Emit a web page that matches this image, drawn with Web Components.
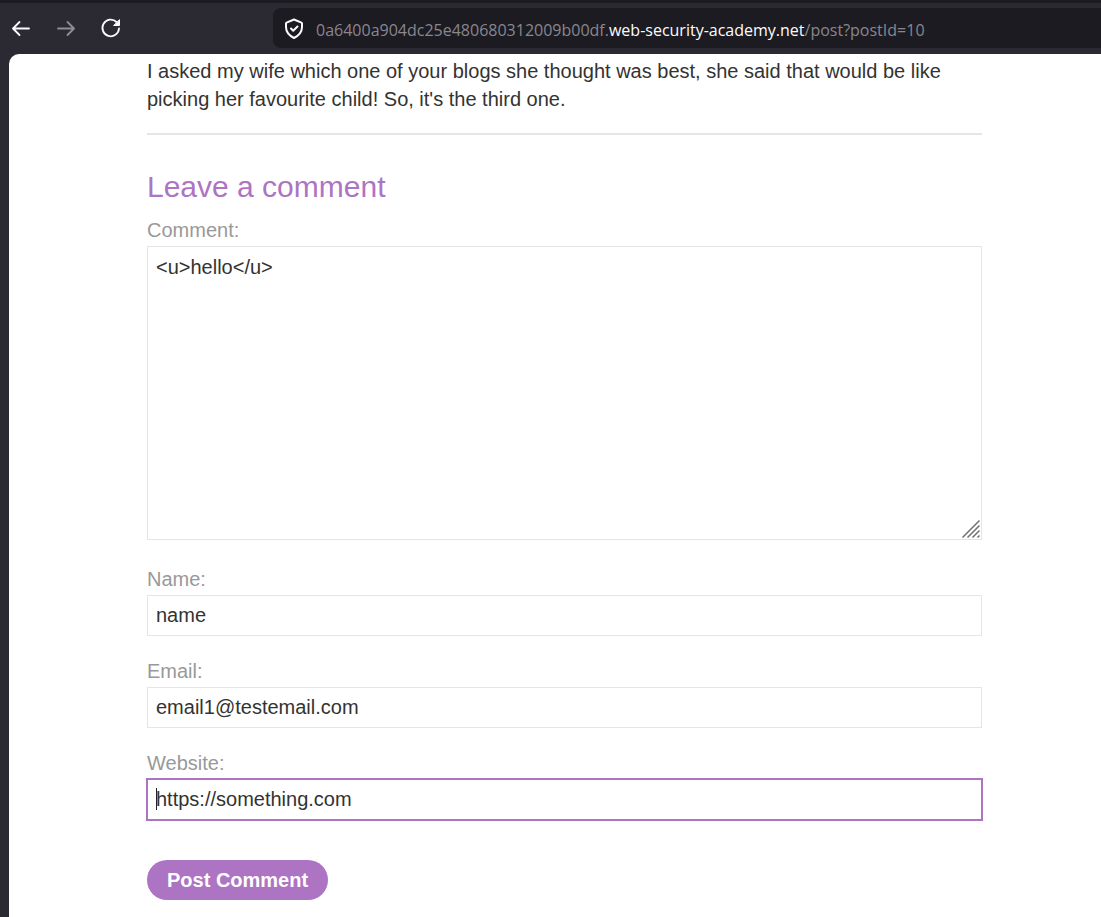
<!DOCTYPE html>
<html lang="en">
<head>
<meta charset="UTF-8">
<meta name="viewport" content="width=device-width, initial-scale=1">
<title>Blog post</title>
<style>
  body {
    margin: 0;
    background-color: #2b2a33;
    font-family: "Liberation Sans", Arial, sans-serif;
    font-size: 20px;
    line-height: 28px;
    color: #333332;
  }
</style>
</head>
<body>
<browser-window>
  <nav-toolbar slot="toolbar" subdomain="0a6400a904dc25e480680312009b00df." domain="web-security-academy.net" path="/post?postId=10"></nav-toolbar>
  <blog-comment>I asked my wife which one of your blogs she thought was best, she said that would be like picking her favourite child! So, it's the third one.</blog-comment>
  <comment-form></comment-form>
</browser-window>

<script>
/**
 * Browser frame: toolbar on top, page with a rounded corner below
 */
class BrowserWindow extends HTMLElement {
  constructor() {
    super();
    this.attachShadow({ mode: 'open' });
    this.shadowRoot.innerHTML = `
      <style>
        :host {
          display: flex;
          flex-direction: column;
          min-height: 100vh;
        }

        main {
          flex: 1;
          margin-left: 9px;
          padding: 3px 119px 17px 138px;
          background-color: #fff;
          border-top-left-radius: 10px;
        }
      </style>
      <slot name="toolbar"></slot>
      <main><slot></slot></main>
    `;
  }
}

/**
 * Navigation buttons and the address bar
 */
class NavToolbar extends HTMLElement {
  constructor() {
    super();
    this.attachShadow({ mode: 'open' });
  }

  connectedCallback() {
    this.shadowRoot.innerHTML = `
      <style>
        :host {
          display: flex;
          align-items: center;
          padding: 5px 0 6px 9px;
          border-top: 3px solid #1c1b22;
          color: #fbfbfe;
        }

        .buttons {
          display: flex;
          gap: 21px;
          flex: 0 0 264px;
        }

        button {
          display: flex;
          padding: 0;
          border: none;
          background: none;
          color: inherit;
        }

        button:disabled {
          color: #8f8e94;
        }

        svg {
          flex: none;
          fill: none;
          stroke: currentColor;
          stroke-width: 1.8;
          stroke-linecap: round;
          stroke-linejoin: round;
        }

        .address {
          display: flex;
          align-items: center;
          gap: 10px;
          flex: 1;
          height: 40px;
          padding-left: 9px;
          background-color: #1c1b22;
          border-radius: 8px 0 0 8px;
        }

        .address svg {
          stroke-width: 2;
        }

        .url {
          padding-top: 4px;
          font-family: "Open Sans", "Noto Sans", sans-serif;
          font-size: 16px;
          line-height: 24px;
          white-space: nowrap;
          color: #88878d;
        }

        .domain {
          color: #fbfbfe;
        }
      </style>
      <div class="buttons">
        <button type="button" aria-label="Back">
          <svg width="24" height="24" viewBox="0 0 24 24"><path d="M20 12.500H4.500M10.500 6l-6.500 6.500 6.500 6.500"/></svg>
        </button>
        <button type="button" aria-label="Forward" disabled>
          <svg width="24" height="24" viewBox="0 0 24 24"><path d="M4 12.500H19.500M13.500 6l6.500 6.500-6.500 6.500"/></svg>
        </button>
        <button type="button" aria-label="Reload">
          <svg width="24" height="24" viewBox="0 0 24 24"><path d="M17.500 6a8.300 8.300 0 1 0 2.500 6.500"/><path d="M20.500 4v5.500h-5.500z" fill="currentColor" stroke-width="1"/></svg>
        </button>
      </div>
      <div class="address">
        <svg width="24" height="24" viewBox="0 0 24 24" role="img" aria-label="Tracking protection"><path d="M12 3.500l7.500 3.200q.5.200.5.800v3.500c0 5-3.500 8.700-8 11-4.500-2.300-8-6-8-11V7.500q0-.6.500-.8z"/><path d="M9 12.500l2.200 2.200L15.500 10.500"/></svg>
        <div class="url"><span>${this.getAttribute('subdomain')}</span><span class="domain">${this.getAttribute('domain')}</span><span>${this.getAttribute('path')}</span></div>
      </div>
    `;
  }
}

/**
 * A single comment, closed by a rule
 */
class BlogComment extends HTMLElement {
  constructor() {
    super();
    this.attachShadow({ mode: 'open' });
    this.shadowRoot.innerHTML = `
      <style>
        :host {
          display: block;
        }

        p {
          margin: 0 0 20px;
        }

        hr {
          margin: 0;
          border: none;
          border-top: 2px solid #e5e5e5;
        }
      </style>
      <p><slot></slot></p>
      <hr>
    `;
  }
}

/**
 * Labelled text box, single line or multiline
 */
class FormField extends HTMLElement {
  constructor() {
    super();
    this.attachShadow({ mode: 'open' });
  }

  connectedCallback() {
    const type = this.getAttribute('type');
    this.shadowRoot.innerHTML = `
      <style>
        :host {
          display: block;
        }

        label {
          display: block;
          margin-bottom: 2px;
          color: #999;
        }

        .box {
          position: relative;
          display: flex;
        }

        input,
        textarea {
          flex: 1;
          min-width: 0;
          box-sizing: border-box;
          height: 41px;
          margin: 0;
          padding: 0 8px;
          border: 1px solid #e5e5e5;
          border-radius: 0;
          outline: none;
          background-color: #fff;
          font: inherit;
          color: #333332;
        }

        textarea {
          height: 294px;
          padding: 6px 8px;
          resize: none;
        }

        /* active field: thicker border and the caret before the first letter */
        :host([active]) input {
          border-color: #ad74c3;
          box-shadow: 0 0 0 1px #ad74c3;
          background-image: linear-gradient(#222, #222);
          background-size: 1px 22px;
          background-position: 8px 8px;
          background-repeat: no-repeat;
        }

        .grip {
          position: absolute;
          right: 1px;
          bottom: 2px;
          stroke: #70706e;
          pointer-events: none;
        }
      </style>
      <label for="control">${this.getAttribute('label')}</label>
      <div class="box"></div>
    `;

    const box = this.shadowRoot.querySelector('.box');
    const control = document.createElement(type === 'multiline' ? 'textarea' : 'input');
    control.id = 'control';
    control.spellcheck = false;
    if (type !== 'multiline') {
      control.type = type;
    }
    control.value = this.getAttribute('value');
    box.append(control);

    if (type === 'multiline') {
      box.insertAdjacentHTML('beforeend', `
        <svg class="grip" width="19" height="19" viewBox="0 0 19 19" stroke-width="1.5"><path d="M0.500 18.500l17-17M5.500 18.500l12-12M10.500 18.500l7-7M15.500 18.500l2-2"/></svg>
      `);
    }
  }
}

/**
 * "Leave a comment" form
 */
class CommentForm extends HTMLElement {
  constructor() {
    super();
    this.attachShadow({ mode: 'open' });
    this.shadowRoot.innerHTML = `
      <style>
        :host {
          display: block;
          margin-top: 32px;
        }

        h2 {
          margin: 0 0 9px;
          font-size: 30px;
          line-height: 40px;
          font-weight: normal;
          color: #ad74c3;
        }

        form-field {
          margin-bottom: 21px;
        }

        form-field[type="multiline"] {
          margin-bottom: 25px;
        }

        form-field:last-of-type {
          margin-bottom: 40px;
        }

        button {
          display: block;
          height: 40px;
          padding: 0 20px;
          border: none;
          border-radius: 20px;
          background-color: #ad74c3;
          font: inherit;
          font-weight: bold;
          color: #fff;
          cursor: pointer;
        }
      </style>
      <form>
        <h2>Leave a comment</h2>
        <form-field type="multiline" label="Comment:" value="&lt;u&gt;hello&lt;/u&gt;"></form-field>
        <form-field type="text" label="Name:" value="name"></form-field>
        <form-field type="email" label="Email:" value="email1@testemail.com"></form-field>
        <form-field type="text" label="Website:" value="https://something.com" active></form-field>
        <button type="submit">Post Comment</button>
      </form>
    `;
  }
}

// Register the custom elements
customElements.define('browser-window', BrowserWindow);
customElements.define('nav-toolbar', NavToolbar);
customElements.define('blog-comment', BlogComment);
customElements.define('form-field', FormField);
customElements.define('comment-form', CommentForm);
</script>
</body>
</html>
